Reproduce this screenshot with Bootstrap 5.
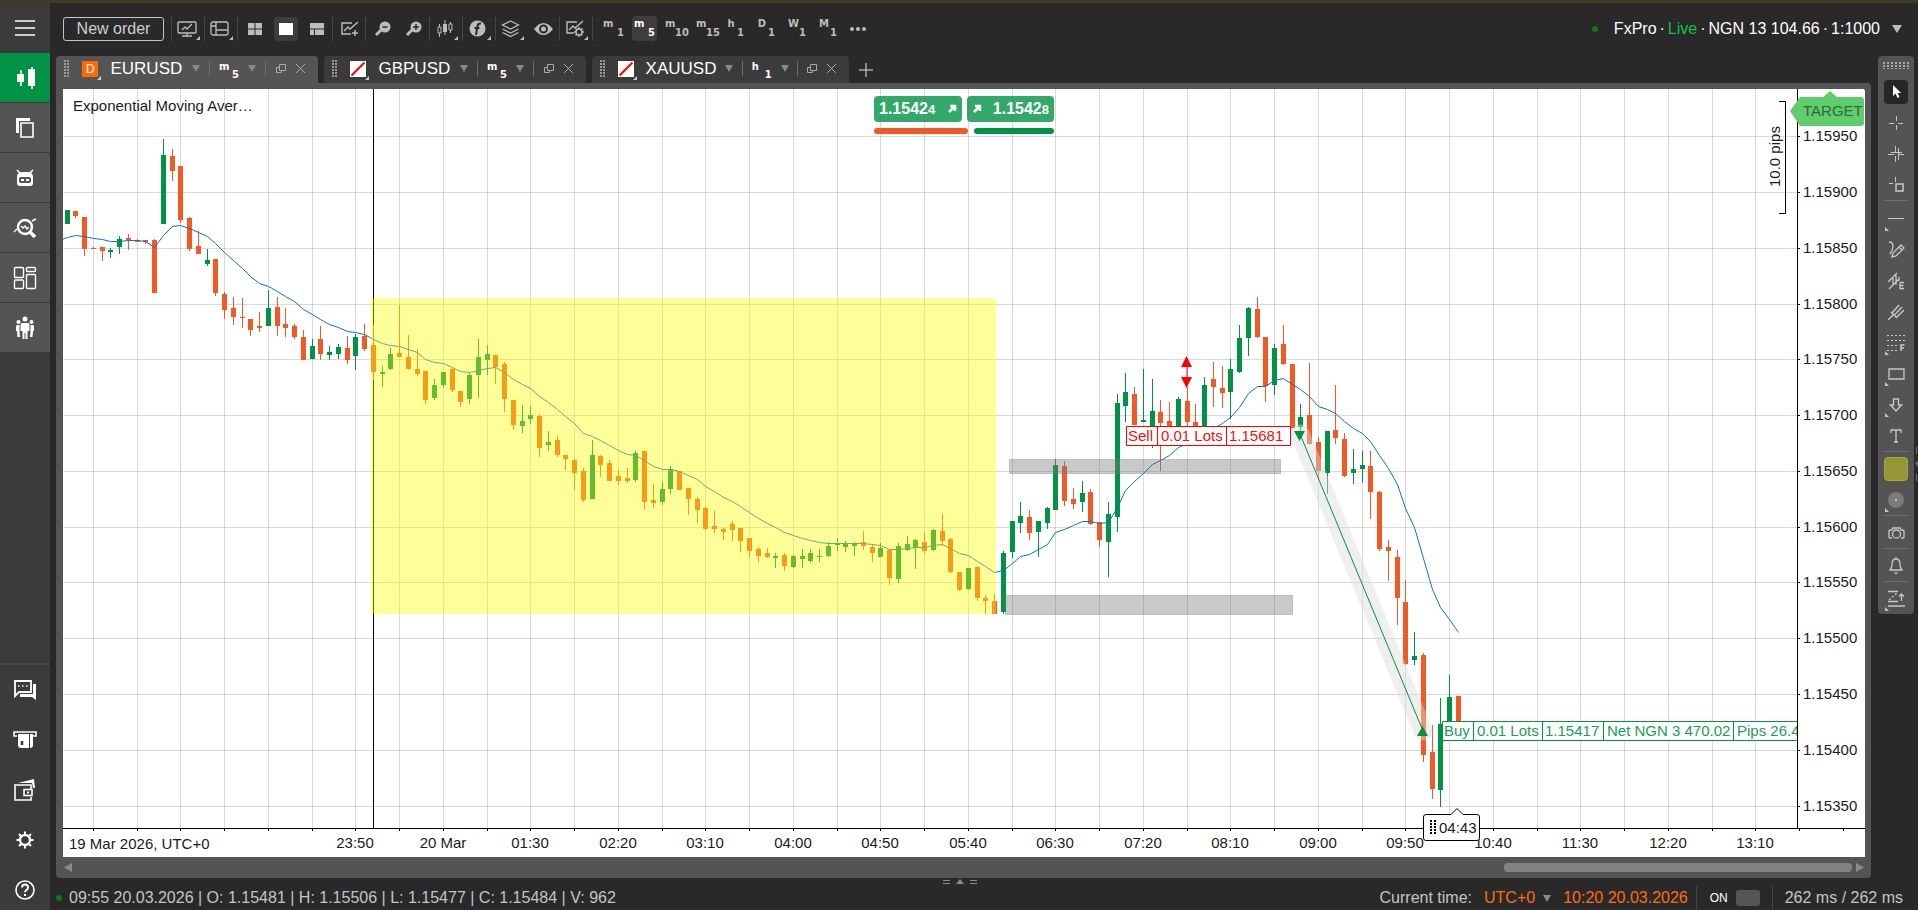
<!DOCTYPE html>
<html lang="en">
<head>
<meta charset="utf-8">
<meta name="viewport" content="width=device-width, initial-scale=1">
<title>EURUSD m5 - cTrader</title>
<link href="https://cdn.jsdelivr.net/npm/bootstrap@5.3.0/dist/css/bootstrap.min.css" rel="stylesheet">
<style>
  :root { --ink:#292929; --panel:#545454; --side:#3b3b3b; --icon:#bdbdbd; --up:#009245; --down:#f15a24; --hot:#ff6a13; }
  body { font-family:"Liberation Sans",Arial,sans-serif; font-size:16px; line-height:20px; background:var(--ink); color:#c4c4c4; border-top:3px solid #3f3a22; overflow:hidden; }
  .shell { height:calc(100vh - 3px); }
  button { border:0; background:transparent; color:inherit; padding:0; }
  svg { display:block; fill:none; stroke:currentColor; }
  a { color:inherit; text-decoration:none; }

  .sidebar { width:50px; background:var(--side); color:#fff; }
  .sidebar button, .sidebar a { width:50px; height:50px; display:flex; align-items:center; justify-content:center; }
  .side-main button { background:var(--panel); border-bottom:1px solid #3a3a3a; }
  .side-main button.current { background:var(--up); }
  .side-foot { border-top:2px solid #484848; height:247px; overflow:hidden; }

  .topbar { height:53px; padding:8px 16px 10px 13px; color:var(--icon); }
  .order-btn { width:101px; height:24px; border:1px solid #c4c4c4; border-radius:3px; color:#d0d0d0; line-height:20px; margin-right:7px; }
  .tool { width:31px; height:24px; display:flex; align-items:center; justify-content:center; position:relative; }
  .tool.current span { width:24px; height:24px; border-radius:4px; background:#3d3d3d; display:flex; align-items:center; justify-content:center; }
  .more::after { content:""; position:absolute; right:4px; bottom:1px; border-left:4px solid transparent; border-bottom:4px solid var(--icon); }
  .rule-v { width:1px; height:24px; background:#444; margin-right:1px; flex:none; }
  .frame-btn { width:25px; height:25px; padding:0 2px; margin-right:6px; border-radius:4px; display:flex; justify-content:space-between; font:bold 10px/12px "DejaVu Sans",sans-serif; }
  .frame-btn span { min-width:10px; text-align:center; margin-top:2px; }
  .frame-btn b { margin-top:11px; }
  .frame-btn.short-frame { padding:0 6px 0 1px; }
  .frame-btn.current { background:#3d3d3d; color:#fff; }
  .account { color:#fff; }
  .sep-dot { padding:0 3px; }
  .live { color:#12c04c; }
  .dot { width:6px; height:6px; border-radius:50%; background:#087d08; }
  .caret { width:0; height:0; border:4px solid transparent; border-top:7px solid #8a8a8a; border-bottom:0; }
  .account .caret { border-width:8px 5px 0; border-top-color:#bdbdbd; }

  .chart-tab { height:27px; border-radius:4px 4px 0 0; background:var(--side); color:#fff; margin-right:6px; padding:0 12px 2px 8px; width:262px; }
  .chart-tab.current { background:var(--panel); }
  .chart-tab.narrow-tab { width:257px; }
  .pair-name { font-size:17px; margin-left:3px; }
  .grip { width:5px; height:17px; background:radial-gradient(circle at 1px 1px,#9a9a9a 1px,transparent 1px) 0 0/3px 3px; }
  .pair-badge { width:16px; height:16px; background:#ff6a00; color:#fff; font-size:12px; line-height:16px; text-align:center; position:relative; }
  .pair-badge::after { content:""; position:absolute; right:-3px; bottom:-3px; border-left:4px solid transparent; border-bottom:4px solid #ccc; }
  .tab-frame { font:bold 10px/12px "DejaVu Sans",sans-serif; width:20px; height:20px; padding-top:2px; display:flex; justify-content:space-between; }
  .tab-frame b { margin-top:8px; }
  .tab-rule { width:1px; height:15px; background:#6e6e6e; }
  .mute { color:#a9a9a9; }

  .stage { background:var(--panel); padding:6px 6px 0 7px; border-radius:0 4px 4px 4px; }
  .plot-box { background:#fff; border-radius:0 3px 0 0; overflow:hidden; }
  .plot-box > svg { width:100%; height:100%; position:absolute; stroke:none; }
  .plot-box text { font:15px "Liberation Sans",Arial,sans-serif; fill:#1b1b1b; }
  .quotes { left:50%; top:7px; width:180px; transform:translateX(-50%); }
  .quotes button { height:26px; border-radius:4px; background:rgba(0,146,69,.8); color:#fff; font-weight:bold; flex:1; padding:0 5px; }
  .quotes small { font-size:13px; }
  .depth { height:6px; border-radius:3px; }
  .scroll-row { height:21px; padding:0 1px; color:#8a8a8a; }
  .thumb { height:9px; width:348px; border-radius:4px; background:#828282; }

  .draw-bar { width:36px; margin:0 4px 0 7px; align-self:flex-start; background:var(--panel); border-radius:4px; color:#c8c8c8; padding-top:20px; position:relative; }
  .draw-bar .dots { position:absolute; top:6px; left:5px; width:26px; height:7px; background:radial-gradient(circle at 1px 1px,#a8a8a8 1px,transparent 1px) 0 0/4px 3px; }
  .draw-bar button { width:36px; height:31px; display:flex; align-items:center; justify-content:center; position:relative; }
  .draw-bar .pick { width:24px; height:24px; border-radius:4px; background:#262626; color:#fff; display:flex; align-items:center; justify-content:center; }
  .draw-bar .ink { width:24px; height:24px; border-radius:4px; background:#969632; border:1px solid #a8a840; }
  .draw-bar hr { margin:0 6px 1px; border:0; height:1px; background:#6f6f6f; opacity:1; }
  .draw-bar hr:first-of-type { margin-bottom:2px; }
  .sub::before { content:""; position:absolute; left:7px; bottom:3px; border-right:4px solid transparent; border-bottom:4px solid #c8c8c8; }

  .edge { right:0; top:443px; color:#6d6d6d; }
  .pull { height:8px; color:#8c8c8c; padding:1px 48px 0 0; }
  .statusbar { height:24px; }
  .statusbar .dot { margin:0 7px 0 6px; }
  .hot { color:var(--hot); }
  .switch { appearance:none; width:24px; height:16px; border-radius:3px; background:#555; margin:0 12px 0 8px; }
  .on-text { font-size:12px; color:#fff; margin-left:12px; }
  .clock { margin-right:8px; }
  .latency { margin:0 15px 0 11px; }
</style>
</head>
<body>
<div class="shell d-flex position-relative">
  <nav class="sidebar d-flex flex-column flex-shrink-0" aria-label="Main">
    <button aria-label="Menu"><svg width="22" height="18" viewBox="0 0 22 18" stroke-width="1.6"><path d="M1 2h20M1 9h20M1 16h20"/></svg></button>
    <div class="side-main">
      <button class="current" aria-label="Trade"><svg width="22" height="24" viewBox="0 0 22 24"><path d="M7 4v16M18 1v22" stroke-width="1.5"/><path d="M3 8h7v8H3zM14 3h7v17h-7z" fill="currentColor" stroke="none"/></svg></button>
      <button aria-label="Copy"><svg width="20" height="22" viewBox="0 0 20 22"><path d="M2.5 16V2.5H15" stroke-width="3"/><path d="M6 6h12v14H6z" stroke-width="1.6"/></svg></button>
      <button aria-label="Algo"><svg width="20" height="18" viewBox="0 0 20 18"><path d="M2 1l3 3M18 1l-3 3" stroke-width="1.600"/><path d="M2 14V8q0-5 6-5h4q6 0 6 5v6q0 3-3 3H5q-3 0-3-3z" fill="currentColor" stroke="none"/><rect x="4" y="8" width="12" height="6" rx="2" fill="#545454" stroke="none"/><path d="M6 11h3M11 11h3" stroke-width="2"/></svg></button>
      <button aria-label="Analyze"><svg width="24" height="22" viewBox="0 0 24 22"><circle cx="12" cy="10" r="7" stroke-width="2.400"/><path d="M17 15l5 5" stroke-width="3.500"/><path d="M8 9l2 2 2-2 2 3 2-2M1 15l3-3M19 4l4-2" stroke-width="1.400"/></svg></button>
      <button aria-label="Widgets"><svg width="24" height="24" viewBox="0 0 24 24" stroke-width="1.400"><rect x="1.500" y="1.500" width="9" height="10" rx="1"/><rect x="13.500" y="1.500" width="9" height="4" rx="1"/><rect x="1.500" y="14" width="9" height="8.500" rx="1"/><rect x="13.500" y="8.500" width="9" height="14" rx="1"/></svg></button>
      <button aria-label="Community"><svg width="20" height="24" viewBox="0 0 20 24" style="fill:currentColor;stroke:none"><circle cx="10" cy="3" r="2.500"/><circle cx="3.500" cy="6" r="2"/><circle cx="16.500" cy="6" r="2"/><path d="M7 7h6q1.500 0 1.500 2v6h-2v8h-2v-6h-1v6h-2v-8h-2V9q0-2 1.500-2zM2 9h2.500v7L5 21H2.500L2 15H1v-5zM18 9h-2.500v7L15 21h2.500l.5-6h1v-5z"/></svg></button>
    </div>
    <div class="side-foot mt-auto">
      <a href="#" aria-label="Chat"><svg width="24" height="22" viewBox="0 0 24 22"><path d="M2 2h16v11H6l-4 4z" stroke-width="1.800"/><path d="M20 5h3v16l-4-3H7v-3h13z" fill="currentColor" stroke="none"/><path d="M5 7h1.500M9 7h1.500M13 7h1.500" stroke-width="1.500"/></svg></a>
      <a href="#" aria-label="Deposit"><svg width="26" height="20" viewBox="0 0 26 20"><path d="M5 6H2V2h22v4h-3" stroke-width="1.600"/><path d="M6 4h11v14H9q-3 0-3-3zM18 4h3v11q0 3-3 3z" fill="currentColor" stroke="none"/><path d="M10 11v4" stroke="#3b3b3b" stroke-width="2.500"/></svg></a>
      <a href="#" aria-label="Wallet"><svg width="24" height="24" viewBox="0 0 24 24" stroke-width="1.600"><path d="M18 11V7H2v15h16v-3"/><rect x="11" y="11.500" width="8" height="6"/><path d="M14 14.500h2" stroke-width="2"/><path d="M5 5l16-4 1 9h-2l-1-5z" fill="currentColor" stroke="none"/></svg></a>
      <a href="#" aria-label="Settings"><svg width="20" height="20" viewBox="0 0 20 20"><circle cx="10" cy="10" r="5" stroke-width="2.400"/><path d="M10 1.500v4M10 14.500v4M1.500 10h4M14.500 10h4M4 4l3 3M13 13l3 3M4 16l3-3M13 7l3-3" stroke-width="2"/></svg></a>
      <a href="#" aria-label="Help"><svg width="22" height="22" viewBox="0 0 22 22"><circle cx="11" cy="11" r="9" stroke-width="1.600"/><path d="M8 8.500q0-3 3-3t3 3q0 1.500-1.500 2.500T11 13.200M11 15v2" stroke-width="2"/></svg></a>
    </div>
  </nav>

  <div class="d-flex flex-column flex-grow-1" style="min-width:0">
    <header class="topbar d-flex align-items-center flex-shrink-0">
      <button class="order-btn">New order</button>
      <div class="d-flex align-items-center">
        <i class="rule-v"></i>
        <button class="tool more" aria-label="Workspace"><svg class="me-1" width="20" height="16" viewBox="0 0 20 16" stroke-width="1.300"><rect x="1" y="1" width="18" height="11" rx="1"/><path d="M5 9l3-3 2 2 5-5M10 12v3M5 15h10"/></svg></button>
        <i class="rule-v"></i>
        <button class="tool more" aria-label="Layout"><svg class="me-1" width="19" height="15" viewBox="0 0 19 15" stroke-width="1.300"><rect x="1" y="1" width="17" height="13" rx="2"/><path d="M6 1v13M6 9h12M1 5h5"/></svg></button>
        <i class="rule-v"></i>
        <button class="tool" aria-label="Grid"><svg width="14" height="12" viewBox="0 0 14 12" style="fill:currentColor;stroke:none"><path d="M0 0h6.500v5.500H0zM7.500 0H14v5.500H7.500zM0 6.500h6.500V12H0zM7.500 6.500H14V12H7.500z"/></svg></button>
        <button class="tool current" aria-label="Single chart"><span><svg width="14" height="12" viewBox="0 0 14 12" style="fill:#fff;stroke:none"><path d="M0 0h14v12H0z"/></svg></span></button>
        <button class="tool" aria-label="Mixed grid"><svg width="14" height="12" viewBox="0 0 14 12" style="fill:currentColor;stroke:none"><path d="M0 0h14v5.500H0zM0 6.500h4V12H0zM5 6.500h9V12H5z"/></svg></button>
        <i class="rule-v"></i>
        <button class="tool" aria-label="Add indicator"><svg width="20" height="16" viewBox="0 0 20 16" stroke-width="1.400"><path d="M12 2H2v11h9M4 10l4-4 2 2 8-7M15 9v6M12 12h6"/></svg></button>
        <i class="rule-v"></i>
        <button class="tool" aria-label="Zoom out"><svg width="16" height="16" viewBox="0 0 16 16"><circle cx="10" cy="6" r="5.500" style="fill:currentColor" stroke="none"/><path d="M7 8l-6 6" stroke-width="3"/><path d="M7.500 6h5" stroke="#292929" stroke-width="1.500"/></svg></button>
        <button class="tool" aria-label="Zoom in"><svg width="16" height="16" viewBox="0 0 16 16"><circle cx="10" cy="6" r="5.500" style="fill:currentColor" stroke="none"/><path d="M7 8l-6 6" stroke-width="3"/><path d="M7 6h6M10 3v6" stroke="#292929" stroke-width="1.500"/></svg></button>
        <i class="rule-v"></i>
        <button class="tool more" aria-label="Chart type"><svg class="me-1" width="16" height="17" viewBox="0 0 16 17"><path d="M2.500 4v13M8 0v15M13.500 2v11"/><path d="M1 7h3v6H1zM12 4h3v6h-3z" style="fill:#292929"/><path d="M6 4h4v8H6z" style="fill:currentColor" stroke="none"/></svg></button>
        <i class="rule-v"></i>
        <button class="tool more" aria-label="Indicators"><svg class="me-1" width="17" height="17" viewBox="0 0 17 17"><circle cx="8.500" cy="8.500" r="8" style="fill:currentColor" stroke="none"/><path d="M12 3.500q-3-.5-3.500 2.500L7 15M5.500 8h5" stroke="#292929" stroke-width="2"/></svg></button>
        <i class="rule-v"></i>
        <button class="tool more" aria-label="Objects"><svg class="me-1" width="19" height="18" viewBox="0 0 19 18" stroke-width="1.300"><path d="M9.500 1l8 4-8 4-8-4zM1.500 9l8 4 8-4M1.500 12.500l8 4 8-4"/></svg></button>
        <button class="tool" aria-label="View"><svg width="19" height="12" viewBox="0 0 19 12"><path d="M0 6q9.500-12 19 0-9.500 12-19 0z" style="fill:currentColor" stroke="none"/><circle cx="9.500" cy="6" r="3.500" stroke="#292929" stroke-width="2"/></svg></button>
        <i class="rule-v"></i>
        <button class="tool more" aria-label="Chart settings"><svg class="me-1" width="20" height="18" viewBox="0 0 20 18" stroke-width="1.400"><path d="M12 2H2v11h7M4 10l4-4 2 2 8-7"/><circle cx="14" cy="12" r="3"/><path d="M14 7v2M14 15v2M9 12h2M17 12h2M10.500 8.500l1.500 1.500M16 14l1.500 1.500M10.500 15.500L12 14M16 10l1.500-1.500"/></svg></button>
        <i class="rule-v me-2"></i>
        <button class="frame-btn"><span>m</span><b>1</b></button>
        <button class="frame-btn current"><span>m</span><b>5</b></button>
        <button class="frame-btn"><span>m</span><b>10</b></button>
        <button class="frame-btn"><span>m</span><b>15</b></button>
        <button class="frame-btn short-frame"><span>h</span><b>1</b></button>
        <button class="frame-btn short-frame"><span>D</span><b>1</b></button>
        <button class="frame-btn short-frame"><span>W</span><b>1</b></button>
        <button class="frame-btn short-frame"><span>M</span><b>1</b></button>
        <button aria-label="More"><svg width="18" height="6" viewBox="0 0 18 6" style="fill:currentColor;stroke:none"><circle cx="3" cy="3" r="2"/><circle cx="9" cy="3" r="2"/><circle cx="15" cy="3" r="2"/></svg></button>
      </div>
      <button class="account ms-auto d-flex align-items-center">
        <i class="dot me-2"></i><span class="ms-1 me-2 ps-1">FxPro<span class="sep-dot">·</span><span class="live">Live</span><span class="sep-dot">·</span>NGN 13 104.66<span class="sep-dot">·</span>1:1000</span>
        <i class="caret ms-1"></i>
      </button>
    </header>

    <div class="d-flex flex-grow-1" style="min-height:0">
      <main class="d-flex flex-column flex-grow-1" style="min-width:0;padding-left:6px">
        <div class="d-flex align-items-end flex-shrink-0">
          <div class="chart-tab current d-flex align-items-center justify-content-between">
            <i class="grip"></i><span class="pair-badge ms-1">D</span><span class="pair-name">EURUSD</span><i class="caret"></i><i class="tab-rule"></i>
            <span class="tab-frame">m<b>5</b></span><i class="caret"></i><i class="tab-rule"></i>
            <button class="mute" aria-label="Detach"><svg width="10" height="10" viewBox="0 0 10 10"><path d="M3.500.5h6v6h-6zM3.500 3.500h-3v5h5v-2"/></svg></button>
            <button class="mute" aria-label="Close"><svg width="11" height="11" viewBox="0 0 11 11"><path d="M1 1l9 9M10 1l-9 9"/></svg></button>
          </div>
          <div class="chart-tab d-flex align-items-center justify-content-between">
            <i class="grip"></i><span class="pair-badge ms-1 bg-white"><svg width="16" height="16" viewBox="0 0 16 16"><path d="M1.500 14.500l13-13" stroke="#f00" stroke-width="2"/></svg></span><span class="pair-name">GBPUSD</span><i class="caret"></i><i class="tab-rule"></i>
            <span class="tab-frame">m<b>5</b></span><i class="caret"></i><i class="tab-rule"></i>
            <button class="mute" aria-label="Detach"><svg width="10" height="10" viewBox="0 0 10 10"><path d="M3.500.5h6v6h-6zM3.500 3.500h-3v5h5v-2"/></svg></button>
            <button class="mute" aria-label="Close"><svg width="11" height="11" viewBox="0 0 11 11"><path d="M1 1l9 9M10 1l-9 9"/></svg></button>
          </div>
          <div class="chart-tab narrow-tab d-flex align-items-center justify-content-between">
            <i class="grip"></i><span class="pair-badge ms-1 bg-white"><svg width="16" height="16" viewBox="0 0 16 16"><path d="M1.500 14.500l13-13" stroke="#f00" stroke-width="2"/></svg></span><span class="pair-name">XAUUSD</span><i class="caret"></i><i class="tab-rule"></i>
            <span class="tab-frame">h<b>1</b></span><i class="caret"></i><i class="tab-rule"></i>
            <button class="mute" aria-label="Detach"><svg width="10" height="10" viewBox="0 0 10 10"><path d="M3.500.5h6v6h-6zM3.500 3.500h-3v5h5v-2"/></svg></button>
            <button class="mute" aria-label="Close"><svg width="11" height="11" viewBox="0 0 11 11"><path d="M1 1l9 9M10 1l-9 9"/></svg></button>
          </div>
          <button class="mute align-self-center ms-1" aria-label="New tab"><svg width="14" height="14" viewBox="0 0 14 14" stroke-width="1.500"><path d="M7 0v14M0 7h14"/></svg></button>
        </div>

        <div class="stage d-flex flex-column flex-grow-1">
          <div class="plot-box position-relative flex-grow-1">
            <svg id="plot" viewBox="63 89 1802 768" preserveAspectRatio="xMinYMin meet" role="img" aria-label="EURUSD candlestick chart"></svg>
            <div class="quotes position-absolute">
              <div class="d-flex" style="gap:5px">
                <button class="d-flex align-items-center justify-content-between"><span>1.1542<small>4</small></span><svg width="10" height="10" viewBox="0 0 10 10"><path d="M3 2h5v5M8 2L2 8" stroke-width="2.500"/></svg></button>
                <button class="d-flex align-items-center justify-content-between"><svg width="10" height="10" viewBox="0 0 10 10"><path d="M3 2h5v5M8 2L2 8" stroke-width="2.500"/></svg><span>1.1542<small>8</small></span></button>
              </div>
              <div class="d-flex" style="gap:6px;margin-top:6px">
                <div class="depth" style="width:94px;background:var(--down)"></div>
                <div class="depth flex-grow-1" style="background:var(--up)"></div>
              </div>
            </div>
          </div>
          <div class="scroll-row d-flex align-items-center flex-shrink-0">
            <svg width="8" height="9" viewBox="0 0 8 9" style="fill:currentColor;stroke:none"><path d="M8 0v9L0 4.500z"/></svg>
            <div class="thumb ms-auto me-1"></div>
            <svg width="8" height="9" viewBox="0 0 8 9" style="fill:currentColor;stroke:none"><path d="M0 0v9l8-4.500z"/></svg>
          </div>
        </div>
      </main>

      <aside class="draw-bar" aria-label="Drawing tools">
        <i class="dots"></i>
        <button aria-label="Cursor"><span class="pick"><svg width="9" height="14" viewBox="0 0 9 14" style="fill:#fff;stroke:none"><path d="M1 0v11l2.500-2.500L5.500 13l2-1-2-4H9z"/></svg></span></button>
        <button aria-label="Crosshair"><svg width="14" height="14" viewBox="0 0 14 14"><path d="M7.500 0v5M7.500 9v5M0 7.500h5M9 7.500h5"/></svg></button>
        <button aria-label="Linked crosshair"><svg width="16" height="16" viewBox="0 0 16 16"><path d="M7.500 0v6M7.500 10v6M0 8.500h6M10 8.500h6M10.500 2v12M3 6.500h11"/></svg></button>
        <button aria-label="Measure"><svg width="15" height="15" viewBox="0 0 15 15"><path d="M6.500 0v5M0 6.500h4"/><path d="M7 7h7v7H7z" stroke-width="1.500"/></svg></button>
        <hr>
        <button class="sub" aria-label="Line"><svg width="16" height="3" viewBox="0 0 16 3"><path d="M0 1.500h16"/></svg></button>
        <button aria-label="Pencil"><svg width="17" height="17" viewBox="0 0 17 17" stroke-width="1.300"><path d="M1 1q4 0 4 4t-3 8M13 4l3 3-8 8-4 1 1-4zM11 6l3 3"/></svg></button>
        <button aria-label="Equidistant channel"><svg width="18" height="18" viewBox="0 0 18 18" stroke-width="1.300"><path d="M1 10L10 1M2 17L12 7M6 6v8M9 3v10M12 5v4M13 10.500v6h4M13 13.500h3.500M13 10.500h4"/></svg></button>
        <button aria-label="Pitchfork"><svg width="16" height="16" viewBox="0 0 16 16" stroke-width="1.400"><path d="M0 16l5-5M3 8l6 6M4 9l7-8M6.500 11L14 3M9 13l7-7"/></svg></button>
        <button class="sub" aria-label="Fibonacci"><svg width="18" height="18" viewBox="0 0 18 18"><path d="M0 1.500h18M0 6.500h18M0 11.500h11M0 16.500h11" stroke-dasharray="2 2"/><path d="M14 17v-6h3.500M14 14h3" stroke-width="1.500"/></svg></button>
        <button class="sub" aria-label="Rectangle"><svg width="17" height="12" viewBox="0 0 17 12"><path d="M1 1h15v10H1z" stroke-width="1.300"/></svg></button>
        <button class="sub" aria-label="Arrow"><svg width="14" height="14" viewBox="0 0 14 14" stroke-width="1.400"><path d="M4.500 1h5v6h3L7 13 1.500 7h3z"/></svg></button>
        <button aria-label="Text"><svg width="12" height="14" viewBox="0 0 12 14" stroke-width="1.300"><path d="M1 4V1h10v3M6 1v12M4 13h4"/></svg></button>
        <hr>
        <button aria-label="Colour"><span class="ink"></span></button>
        <button class="sub" aria-label="Thickness"><svg width="16" height="16" viewBox="0 0 16 16" style="stroke:none"><circle cx="8" cy="8" r="8" fill="#7b7b7b"/><circle cx="8" cy="8" r="1" fill="#ddd"/></svg></button>
        <hr>
        <button aria-label="Snapshot"><svg width="17" height="12" viewBox="0 0 17 12" stroke-width="1.300"><path d="M4 11H2q-1 0-1-1V4q0-1 1-1h2l1-2h7l1 2h2q1 0 1 1v6q0 1-1 1h-2"/><circle cx="8.500" cy="7" r="4"/></svg></button>
        <hr>
        <button aria-label="Alerts"><svg width="14" height="17" viewBox="0 0 14 17" stroke-width="1.300"><path d="M1 13q2-2 2-6 0-5 4-5t4 5q0 4 2 6zM7 0v2M5.500 16h3"/></svg></button>
        <hr>
        <button class="sub" aria-label="Templates"><svg width="18" height="17" viewBox="0 0 18 17" stroke-width="1.300"><path d="M1 1.500h10M1 11.500h10M1 16h17M14.500 11V4M12 6.500L14.500 4 17 6.500"/><path d="M2 10l8-7" stroke-dasharray="2 2"/></svg></button>
      </aside>
    </div>

    <div class="pull d-flex justify-content-center flex-shrink-0">
      <svg width="34" height="6" viewBox="0 0 34 6"><path d="M0 1.500h7M0 4.500h7M27 1.500h7M27 4.500h7"/><path d="M17 0l4 5h-8z" style="fill:currentColor;stroke:none"/></svg>
    </div>
    <footer class="statusbar d-flex align-items-center flex-shrink-0">
      <i class="dot"></i>
      <span>09:55 20.03.2026 | O: 1.15481 | H: 1.15506 | L: 1.15477 | C: 1.15484 | V: 962</span>
      <span class="ms-auto me-2 pe-1">Current time:</span>
      <button class="hot d-flex align-items-center me-2 pe-1">UTC+0<i class="caret ms-2"></i></button>
      <span class="hot clock">10:20 20.03.2026</span>
      <i class="rule-v"></i>
      <label class="on-text" for="quick">ON</label><input id="quick" class="switch" type="checkbox">
      <i class="rule-v"></i>
      <span class="latency">262 ms / 262 ms</span>
    </footer>
  </div>
  <svg class="edge position-absolute" width="3" height="36" viewBox="0 0 3 36"><path d="M1.500 1v7M1.500 28v7"/><path d="M3 14v7L0 17.500z" style="fill:currentColor;stroke:none"/></svg>
</div>

<script src="https://cdn.jsdelivr.net/npm/bootstrap@5.3.0/dist/js/bootstrap.bundle.min.js"></script>
<script>
// One entry per 5-minute bar: direction, high, body top, body bottom, low (chart units, y down).
const bars = `g 210 210 224 224;r 211 211 216 218;r 217 217 249 256;r 247 248 249 249;r 247 247 251 261;g 248 250 252 258;g 236 239 247 254;r 234 238 240 250;r 239 240 242 242;r 240 240 242 244;
r 239 240 293 293;g 139 155 224 224;r 149 156 171 181;r 166 166 220 223;r 217 218 249 251;r 231 246 254 254;g 249 260 264 266;r 259 259 293 296;r 292 294 310 319;r 297 308 317 325;
r 298 317 318 328;r 319 319 330 336;r 312 326 328 332;g 290 308 326 326;r 297 307 326 336;r 308 324 328 337;r 324 326 337 339;r 330 337 360 360;g 339 346 359 359;r 326 339 354 360;
g 346 352 355 360;g 344 347 354 359;r 336 348 360 364;g 334 337 356 370;r 324 336 349 351;r 325 345 372 380;g 366 372 374 387;g 348 354 369 370;r 305 353 357 357;r 335 357 369 370;
r 349 369 374 376;r 371 371 400 404;g 379 385 398 400;g 372 372 385 388;r 368 369 390 392;r 391 391 402 407;g 373 375 399 404;g 339 357 375 398;g 345 354 360 375;r 355 355 367 384;
r 362 364 399 412;r 400 400 425 430;g 405 421 426 433;g 406 415 419 424;r 414 416 448 457;g 431 442 445 451;r 436 440 455 457;r 455 455 459 470;r 459 460 473 490;r 468 471 500 502;
g 440 455 499 499;r 455 456 465 477;r 460 463 481 481;r 470 476 481 485;r 468 478 481 483;g 451 453 480 482;r 451 451 502 510;r 484 500 503 508;g 482 489 502 505;g 466 469 489 494;
r 471 471 490 490;r 488 488 499 515;r 497 499 510 523;r 507 508 529 530;r 511 526 529 533;r 528 529 532 540;r 521 524 530 541;r 528 528 541 552;r 538 538 551 558;r 547 549 556 562;
r 548 553 557 558;g 553 556 558 568;r 553 555 566 571;g 555 556 567 568;g 549 556 559 568;g 549 553 561 563;g 549 556 557 562;g 542 546 556 557;g 538 544 545 551;g 541 543 547 552;
g 542 543 546 556;r 531 542 546 550;r 544 547 553 562;g 543 548 557 557;r 550 550 578 585;g 543 546 579 583;g 536 544 550 551;g 539 540 548 569;r 532 542 551 554;g 529 530 550 551;
r 514 531 541 546;r 538 539 572 573;r 572 572 590 591;g 568 568 589 590;r 566 567 598 601;r 595 598 601 614;r 594 601 614 614;g 551 553 612 614;g 521 521 552 558;g 502 516 523 533;
r 510 517 533 540;g 521 521 532 557;g 507 508 523 529;g 459 465 510 510;r 461 466 501 506;r 488 499 504 509;g 481 493 502 512;r 489 492 524 525;r 522 522 540 547;g 502 514 542 577;
g 394 403 517 532;g 373 392 406 422;r 387 394 425 425;g 369 420 422 422;g 379 411 432 448;r 400 412 423 471;r 402 421 430 430;g 397 399 430 430;r 387 401 422 430;r 404 422 430 430;
g 377 385 430 430;r 362 379 387 407;r 366 388 393 408;g 359 369 392 419;g 325 338 372 373;g 307 308 338 356;r 297 309 337 338;r 337 337 386 402;g 344 348 385 395;r 325 344 364 365;
r 364 364 428 428;g 404 417 427 434;r 363 415 444 444;r 437 442 471 480;g 431 431 473 494;r 385 430 438 444;r 433 439 476 477;g 449 469 473 484;g 451 465 469 483;r 451 466 492 519;
r 491 492 549 551;r 540 547 551 581;r 550 557 598 625;r 580 602 664 665;g 632 656 660 665;r 653 655 755 762;r 725 752 789 799;g 698 724 790 807;g 675 697 725 725;r 696 696 722 722`
  .split(";").map(s => s.trim().split(" "));

const average = [237,235,236,238,239,241,241,240,240,241,247,235,226,225,228,232,236,243,252,260,268,276,283,286,291,296,301,309,314,319,324,327,331,332,334,339,343,345,346,349,352,359,362,363,367,371,372,370,368,367,372,
379,384,388,396,402,409,416,423,433,436,440,445,450,454,455,460,466,469,469,471,475,479,486,491,497,501,506,512,518,523,527,532,535,538,540,542,543,543,543,543,543,544,545,549,549,548,547,547,545,544,548,553,555,561,566,572,
570,563,556,554,549,544,532,529,525,521,521,523,522,507,490,481,473,464,460,455,447,443,438,433,428,423,417,407,393,386,386,380,378,384,389,396,406,409,413,421,428,433,441,455,468,484,508,527,558,589,607,619,632];

const prices = [136,192,248,304,359,415,471,527,582,638,694,750,806];
const times = ["23:50","20 Mar","01:30","02:20","03:10","04:00","04:50","05:40","06:30","07:20","08:10","09:00","09:50","10:40","11:30","12:20","13:10"];
const AXIS_X = 1797, AXIS_Y = 828, UP = "#009245", DOWN = "#f15a24";
const colX = k => Math.floor(93.3 + 43.75 * k);
const barX = i => Math.floor(67.05 + 8.75 * i);
const box = (x, y, w, h, fill) => `<rect x="${x}" y="${y}" width="${w}" height="${h}" fill="${fill}" shape-rendering="crispEdges"/>`;
const label = (x, y, t, more = "") => `<text x="${x}" y="${y}" ${more}>${t}</text>`;

let out = "";
for (let k = 0; k < 39; k++) out += box(colX(k), 89, 1, AXIS_Y - 89, "rgba(0,0,0,.15)");
prices.forEach(y => out += box(63, y, AXIS_X - 63, 1, "rgba(0,0,0,.15)"));
out += box(373, 89, 1, AXIS_Y - 89, "#000");

bars.forEach(([side, hi, top, bottom, lo], i) => {
  const x = barX(i), fill = side === "g" ? UP : DOWN;
  out += box(x, hi, 1, lo - hi, fill) + box(x - 2, top, 5, bottom - top, fill);
});
out += `<polyline points="63,239 ${average.map((y, i) => (barX(i) + 0.5) + "," + (y + 0.5)).join(" ")}" fill="none" stroke="#0a73c4" stroke-width="1"/>`;

// Session range and supply/demand zones
out += box(371, 298, 625, 316, "rgba(255,255,0,.4)");
out += `<g fill="rgba(120,120,120,.4)" stroke="rgba(120,120,120,.35)"><rect x="1009.500" y="459.500" width="271" height="14"/><rect x="1005.500" y="595.500" width="287" height="19"/></g>`;

// Closed deal
out += `<path d="M1300 434L1423 731" stroke="rgba(220,220,220,.45)" stroke-width="19" stroke-linecap="round"/>
<path d="M1300 434L1423 731" stroke="${UP}"/>
<path d="M1294 431h11l-5.500 10zM1417 736h11l-5.500-10z" fill="${UP}"/>
<path d="M1187 362v20" stroke="#f00"/><path d="M1181 367h11l-5.500-11zM1181 377h11l-5.500 11z" fill="#f00"/>`;
out += `<path d="M1126.500 426.500h164v19h-164zM1157.500 426v20M1226.500 426v20" fill="#fff" stroke="#f00"/>`;
out += [[1128,"Sell"],[1161,"0.01 Lots"],[1229,"1.15681"]].map(([x, t]) => label(x, 441, t, 'style="fill:#ee1111"')).join("");
out += `<path d="M1798 721.500h-355.500v19H1798M1473.500 721v20M1542.500 721v20M1603.500 721v20M1733.500 721v20" fill="#fff" stroke="${UP}"/>`;
out += [[1444,"Buy"],[1477,"0.01 Lots"],[1545,"1.15417"],[1607,"Net NGN 3 470.02"],[1737,"Pips 26.4"]].map(([x, t]) => label(x, 736, t, 'style="fill:#1b9e58"')).join("");

// Scales
out += box(AXIS_X + 1, 89, 67, 768, "#fff") + box(AXIS_X, 89, 1, AXIS_Y - 89, "#000") + box(63, AXIS_Y, 1802, 1, "#000");
prices.forEach((y, n) => out += box(AXIS_X, y, 3, 1, "#000") + label(1803, y + 5, (1.1595 - n * 0.0005).toFixed(5)));
for (let k = 0; k < 41; k++) out += box(colX(k), AXIS_Y, 1, 3, "#000");
times.forEach((t, n) => out += label(colX(6 + 2 * n), 848, t, 'text-anchor="middle"'));
out += label(69, 849, "19 Mar 2026, UTC+0") + label(73, 111, "Exponential Moving Aver…");
out += `<path d="M1779 101.500h6.500v112h-6.500" fill="none" stroke="#000"/>` + label(0, 0, "10.0 pips", 'transform="translate(1780 187) rotate(-90)"');

// Target flag and bar countdown
out += `<path d="M1790 111l10-14h23l7-6 7 6h24q3 0 3 3v23q0 3-3 3h-61z" fill="#5fcc6d"/>` + label(1803, 116, "TARGET", 'style="fill:#2f6b40"');
out += `<path d="M1426 814.500h25l6-6 6 6h14q2.500 0 2.500 2.500v21q0 2.500-2.500 2.500h-51q-2.500 0-2.500-2.500v-21q0-2.500 2.500-2.500z" fill="#fff" stroke="#000"/>`;
for (let r = 0; r < 5; r++) out += box(1430, 820 + 3 * r, 2, 2, "#000") + box(1434, 820 + 3 * r, 2, 2, "#000");
out += label(1439, 833, "04:43");
document.getElementById("plot").innerHTML = out;
</script>
</body>
</html>
